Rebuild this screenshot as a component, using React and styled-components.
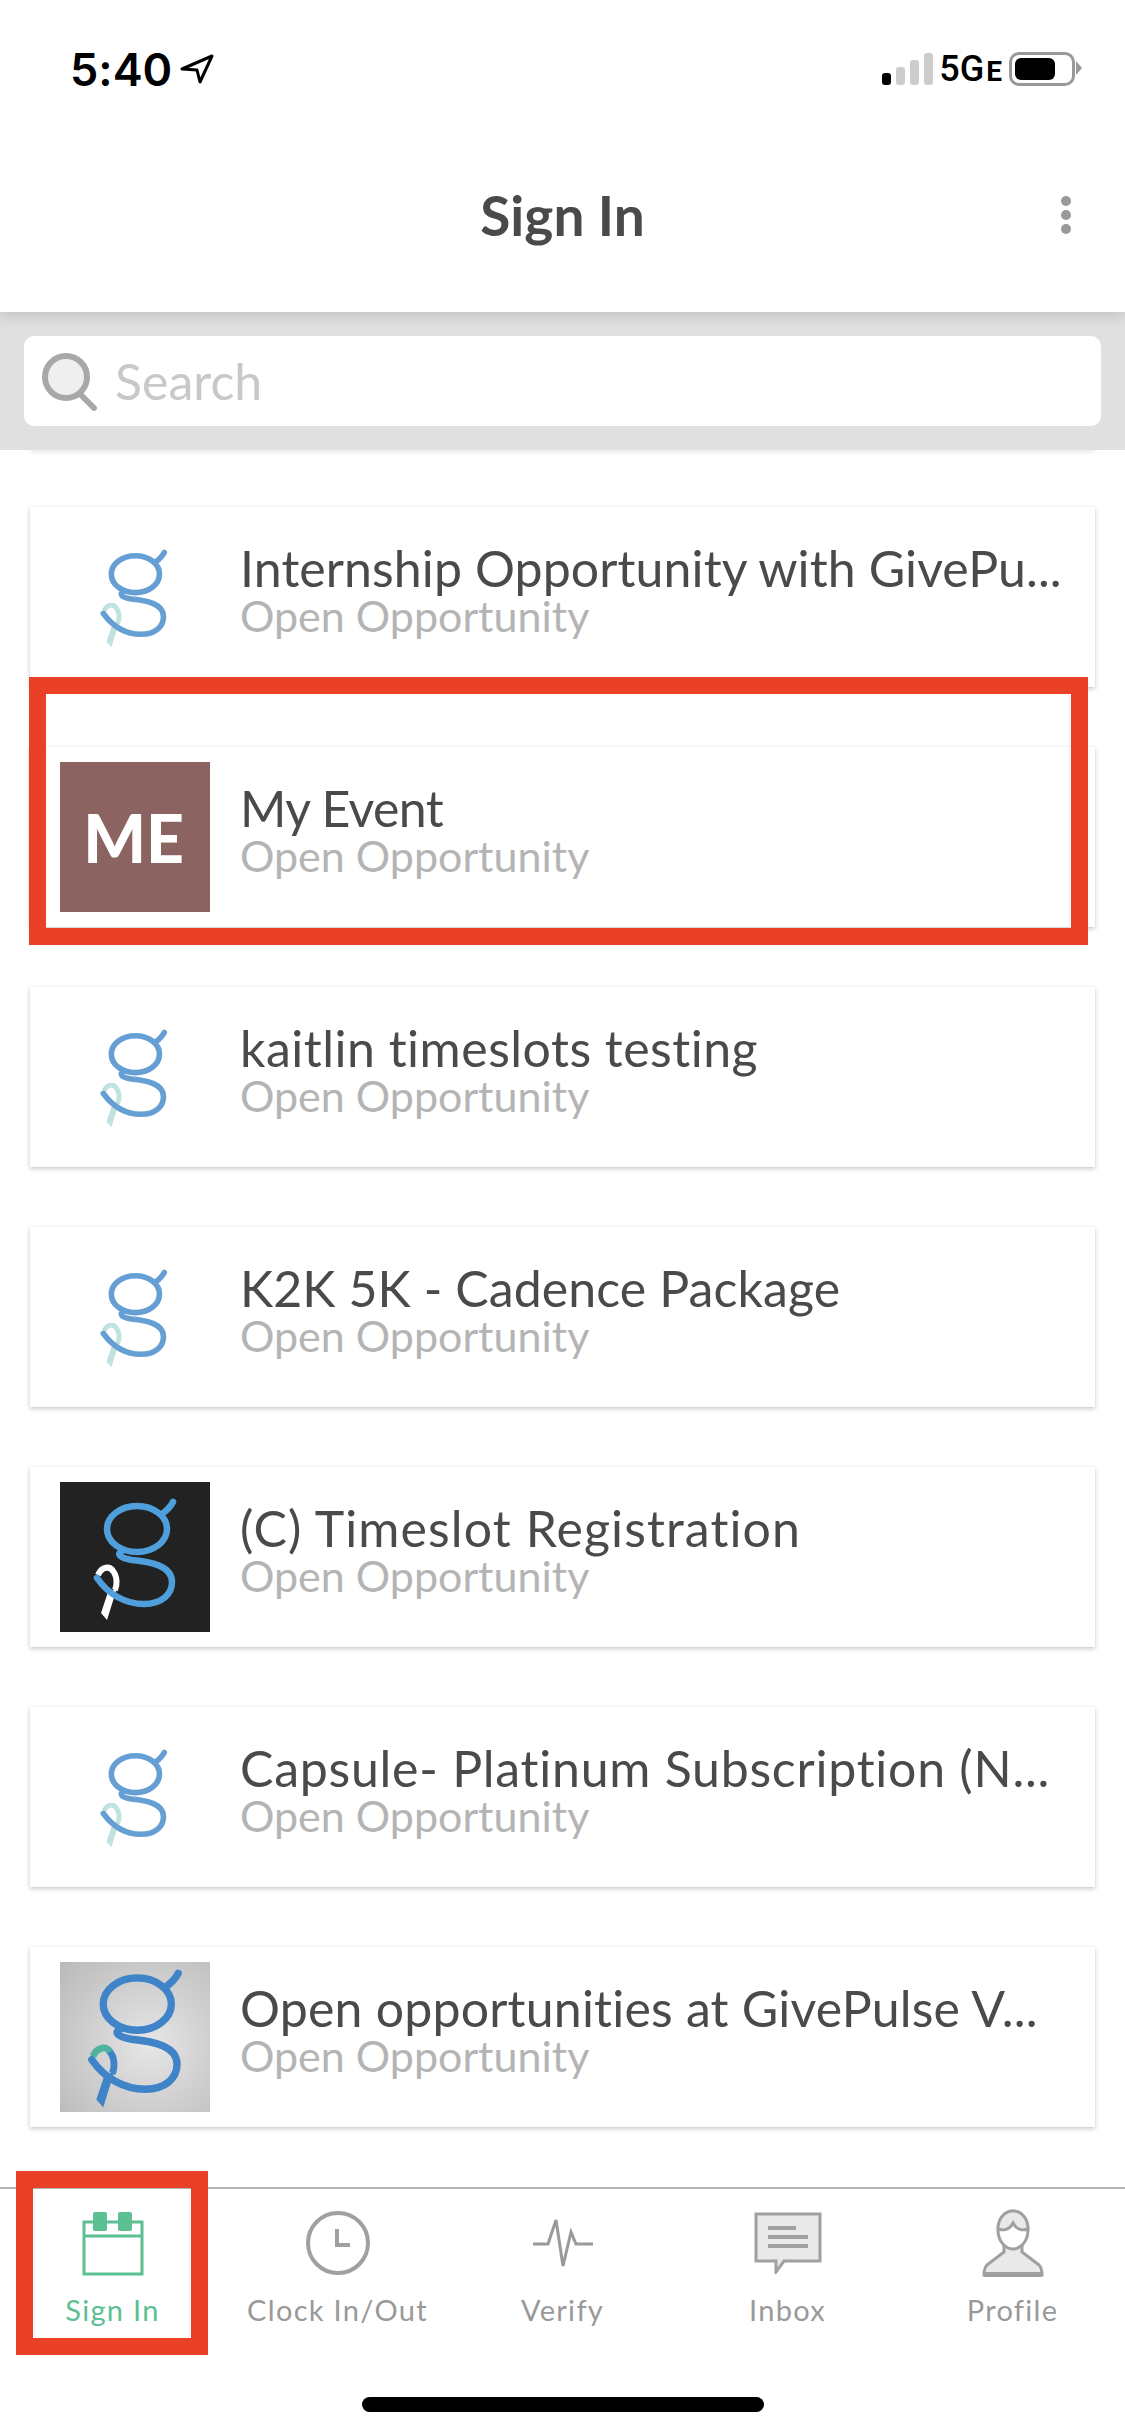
import React from 'react'
import styled, { createGlobalStyle } from 'styled-components'

const GlobalStyle = createGlobalStyle`
    html, body {
        margin: 0;
        padding: 0;
        background: #fff;
    }
    * {
        box-sizing: border-box;
    }
`;

const items = [
    { title: 'Internship Opportunity with GivePu...', thumb: 'plain', track: 0.1 },
    { title: 'My Event', thumb: 'initials', track: -0.6 },
    { title: 'kaitlin timeslots testing', thumb: 'plain', track: 0.5 },
    { title: 'K2K 5K - Cadence Package', thumb: 'plain', track: 0.1 },
    { title: '(C) Timeslot Registration', thumb: 'dark', track: 1.1 },
    { title: 'Capsule- Platinum Subscription (N...', thumb: 'plain', track: 0.75 },
    { title: 'Open opportunities at GivePulse V...', thumb: 'grey', track: 0.2 },
];

const logoThemes = {
    plain: { view: '-17 -18 187 187', blue: '#659fd3', ribbon: '#bfe3e0', side: '#bfe3e0', tail: '#bfe3e0', width: 7 },
    dark: { view: '0 0 150 150', blue: '#4f9fdc', ribbon: '#fff', side: '#fff', tail: '#fff', width: 6.5 },
    grey: { view: '9 10 132 132', blue: '#3f83c8', ribbon: '#4fb3a0', side: '#3f83c8', tail: '#3f83c8', width: 6.5 },
};

function Logo({ kind }) {
    const t = logoThemes[kind];
    return (
        <svg width="150" height="150" viewBox={t.view} fill="none">
            <path d="M48 110 L41 131 L47 138 L57 106 Z" fill={t.tail} />
            <path d="M52 88 C58 94 57 104 55 108" stroke={t.side} strokeWidth="6" />
            <path d="M38 93 C42 84 50 84 53 89" stroke={t.ribbon} strokeWidth="6" />
            <g stroke={t.blue} strokeWidth={t.width} strokeLinecap="round">
                <ellipse cx="77" cy="47" rx="30" ry="23" />
                <path d="M102 32 C106 29 110 26 113 20" />
                <path d="M37 96 C48 112 65 122 84 122 C102 122 112 112 112 100 C112 84 92 80 72 78 C60 76 56 72 62 69" />
            </g>
        </svg>
    );
}

function CalendarIcon() {
    return (
        <svg width="64" height="66" viewBox="0 0 64 66" fill="none" stroke="#5cc092" strokeWidth="3">
            <rect x="3" y="12" width="58" height="52" />
            <path d="M3 26 H61" />
            <rect x="12" y="2" width="14" height="19" rx="2" fill="#5cc092" stroke="none" />
            <rect x="37" y="2" width="14" height="19" rx="2" fill="#5cc092" stroke="none" />
        </svg>
    );
}

function ClockIcon() {
    return (
        <svg width="66" height="66" viewBox="0 0 66 66" fill="none" stroke="#a0a0a0" strokeWidth="4">
            <circle cx="33" cy="33" r="30" />
            <path d="M32 19 V35 H45" />
        </svg>
    );
}

function PulseIcon() {
    return (
        <svg width="62" height="50" viewBox="0 0 62 50" fill="none" stroke="#9a9a9a" strokeWidth="3">
            <path d="M1 26 H16 L24 2 L31 48 L39 14 L44 26 H61" />
        </svg>
    );
}

function InboxIcon() {
    return (
        <svg width="68" height="62" viewBox="0 0 68 62" fill="#e9e9e9" stroke="#a0a0a0" strokeWidth="3">
            <path d="M2 2 H66 V49 H30 L22 60 V49 H2 Z" />
            <path d="M14 16 H42 M14 25 H54 M14 34 H54" strokeWidth="4" fill="none" />
        </svg>
    );
}

function ProfileIcon() {
    return (
        <svg width="62" height="68" viewBox="0 0 62 68" fill="none" stroke="#a0a0a0" strokeWidth="3">
            <path d="M22 36 V43 L5 56 C2 59 2 62 2 66 H60 C60 62 60 59 57 56 L40 43 V36" fill="#e9e9e9" />
            <path d="M2 65.5 H60" strokeWidth="5" />
            <ellipse cx="31" cy="21" rx="15" ry="19" fill="#fff" />
            <path d="M16 20 C22 22 28 20 31 14 C34 20 40 22 46 20 C46 10 40 2 31 2 C22 2 16 10 16 20 Z" fill="#e9e9e9" />
        </svg>
    );
}

const tabs = [
    { label: 'Sign In', icon: <CalendarIcon />, active: true },
    { label: 'Clock In/Out', icon: <ClockIcon /> },
    { label: 'Verify', icon: <PulseIcon /> },
    { label: 'Inbox', icon: <InboxIcon /> },
    { label: 'Profile', icon: <ProfileIcon /> },
];

export default function App() {
    return (
        <Page>
            <GlobalStyle />
            <Header>
                <StatusBar>
                    <Clock>
                        5:40
                        <svg width="34" height="30" viewBox="0 0 34 30" fill="none" stroke="#000" strokeWidth="3" strokeLinejoin="round">
                            <path d="M32 2 L2 15 L17 16 L20 28 Z" />
                        </svg>
                    </Clock>
                    <StatusIcons>
                        <Signal>
                            <Bar $h={12} $on />
                            <Bar $h={18} />
                            <Bar $h={25} />
                            <Bar $h={32} />
                        </Signal>
                        <Network>5G</Network>
                        <NetworkSmall>E</NetworkSmall>
                        <Battery>
                            <BatteryLevel />
                        </Battery>
                    </StatusIcons>
                </StatusBar>
                <NavBar>
                    <NavTitle>Sign In</NavTitle>
                    <Kebab>
                        <i /><i /><i />
                    </Kebab>
                </NavBar>
            </Header>

            <SearchBand>
                <SearchBox>
                    <svg width="60" height="62" viewBox="0 0 60 62" fill="#efefef" stroke="#a8a8a8" strokeWidth="6" strokeLinecap="round">
                        <circle cx="26" cy="27" r="21" />
                        <path d="M40 44 L54 58" />
                    </svg>
                    <SearchText>Search</SearchText>
                </SearchBox>
            </SearchBand>

            <List>
                {items.map((item) => (
                    <Card key={item.title}>
                        <Thumb $kind={item.thumb}>
                            {item.thumb === 'initials' ? 'ME' : <Logo kind={item.thumb} />}
                        </Thumb>
                        <CardText>
                            <Title $track={item.track}>{item.title}</Title>
                            <Subtitle>Open Opportunity</Subtitle>
                        </CardText>
                    </Card>
                ))}
            </List>

            <TabBar>
                {tabs.map((tab) => (
                    <Tab key={tab.label}>
                        <TabIcon>{tab.icon}</TabIcon>
                        <TabLabel $active={tab.active}>{tab.label}</TabLabel>
                    </Tab>
                ))}
            </TabBar>
            <HomeArea>
                <HomeBar />
            </HomeArea>

            <Highlight $top={677} $left={29} $width={1059} $height={268} />
            <Highlight $top={2171} $left={16} $width={192} $height={184} />
        </Page>
    );
}

const Page = styled.div`
    position: relative;
    width: 1125px;
    height: 2436px;
    display: flex;
    flex-direction: column;
    overflow: hidden;
    background: #fff;
    font-family: 'Lato', 'Liberation Sans', sans-serif;
    font-variant-ligatures: none;
`;

const Header = styled.div`
    position: relative;
    z-index: 2;
    height: 312px;
    flex-shrink: 0;
    background: #fff;
    box-shadow: 0 4px 14px rgba(0, 0, 0, 0.14);
`;

const StatusBar = styled.div`
    height: 138px;
    padding: 0 50px 0 70px;
    display: flex;
    align-items: center;
    justify-content: space-between;
`;

const Clock = styled.div`
    display: flex;
    align-items: center;
    gap: 8px;
    font-family: 'Inter', sans-serif;
    font-weight: 600;
    font-size: 45px;
    color: #000;
`;

const StatusIcons = styled.div`
    display: flex;
    align-items: flex-end;
`;

const Signal = styled.div`
    display: flex;
    align-items: flex-end;
    gap: 5px;
    margin-right: 6px;
    margin-bottom: 1px;
`;

const Bar = styled.div`
    width: 9px;
    height: ${(p) => p.$h}px;
    border-radius: 3px;
    background: ${(p) => (p.$on ? '#000' : '#cccccc')};
`;

const Network = styled.div`
    font-family: 'Roboto', sans-serif;
    font-weight: 500;
    font-size: 36px;
    line-height: 34px;
    color: #000;
`;

const NetworkSmall = styled.div`
    font-family: 'Roboto', sans-serif;
    font-weight: 700;
    font-size: 28px;
    line-height: 28px;
    color: #000;
    margin: 0 7px 0 2px;
`;

const Battery = styled.div`
    position: relative;
    width: 66px;
    height: 34px;
    padding: 3px;
    border: 3.5px solid #999;
    border-radius: 10px;

    &::after {
        content: '';
        position: absolute;
        top: 6px;
        right: -10px;
        width: 6px;
        height: 14px;
        background: #999;
        clip-path: polygon(0 0, 100% 50%, 0 100%);
    }
`;

const BatteryLevel = styled.div`
    width: 40px;
    height: 100%;
    border-radius: 6px;
    background: #000;
`;

const NavBar = styled.div`
    height: 154px;
    display: grid;
    grid-template-columns: 1fr auto 1fr;
    align-items: center;
`;

const NavTitle = styled.div`
    grid-column: 2;
    font-weight: 700;
    font-size: 55px;
    color: #4a4a4a;
`;

const Kebab = styled.div`
    grid-column: 3;
    justify-self: end;
    display: flex;
    flex-direction: column;
    gap: 4px;
    margin-right: 54px;

    i {
        display: block;
        width: 10px;
        height: 10px;
        border-radius: 50%;
        background: #999;
    }
`;

const SearchBand = styled.div`
    position: relative;
    z-index: 1;
    height: 138px;
    flex-shrink: 0;
    padding: 24px;
    background: #e0e0e0;

    &::after {
        content: '';
        position: absolute;
        left: 30px;
        right: 30px;
        bottom: 0;
        height: 3px;
        box-shadow: 0 2px 4px rgba(0, 0, 0, 0.12);
    }
`;

const SearchBox = styled.div`
    height: 90px;
    padding-left: 16px;
    display: flex;
    align-items: center;
    gap: 15px;
    border-radius: 10px;
    background: #fff;
`;

const SearchText = styled.div`
    font-size: 50px;
    color: #c8c8c8;
`;

const List = styled.div`
    flex-shrink: 0;
    padding: 57px 30px 60px;
    display: flex;
    flex-direction: column;
    gap: 60px;
`;

const Card = styled.div`
    height: 180px;
    flex-shrink: 0;
    padding: 15px 22px 15px 30px;
    display: flex;
    align-items: center;
    gap: 30px;
    background: #fff;
    box-shadow: 0 2px 5px rgba(0, 0, 0, 0.2), 0 0 2px rgba(0, 0, 0, 0.05);
`;

const thumbBackground = {
    plain: '#fff',
    initials: '#8b6462',
    dark: '#222222',
    grey: 'radial-gradient(circle at 60% 55%, #e6e6e6, #b9b9b9)',
};

const Thumb = styled.div`
    width: 150px;
    height: 150px;
    flex-shrink: 0;
    padding-right: 3px;
    display: flex;
    align-items: center;
    justify-content: center;
    background: ${(p) => thumbBackground[p.$kind]};
    color: #fff;
    font-weight: 900;
    font-size: 66px;

    svg {
        flex-shrink: 0;
        margin-right: -3px;
    }
`;

const CardText = styled.div`
    min-width: 0;
    flex: 1;
    padding-bottom: 12px;
`;

const Title = styled.div`
    font-size: 50px;
    line-height: 50px;
    letter-spacing: ${(p) => p.$track}px;
    color: #4a4a4a;
    white-space: nowrap;
`;

const Subtitle = styled.div`
    font-size: 43px;
    line-height: 46px;
    color: #b4b4b4;
`;

const TabBar = styled.div`
    height: 148px;
    flex-shrink: 0;
    display: grid;
    grid-template-columns: repeat(5, 1fr);
    border-top: 2px solid #b4b4b4;
`;

const Tab = styled.div`
    display: flex;
    flex-direction: column;
    align-items: center;
    padding-top: 19px;
`;

const TabIcon = styled.div`
    height: 70px;
    display: flex;
    align-items: center;
    justify-content: center;
`;

const TabLabel = styled.div`
    margin-top: 14px;
    font-size: 29px;
    letter-spacing: 1.3px;
    color: ${(p) => (p.$active ? '#5cc092' : '#999')};
`;

const HomeArea = styled.div`
    flex: 1;
    display: flex;
    justify-content: center;
    padding-top: 62px;
`;

const HomeBar = styled.div`
    width: 402px;
    height: 15px;
    border-radius: 8px;
    background: #000;
`;

const Highlight = styled.div`
    position: absolute;
    z-index: 3;
    top: ${(p) => p.$top}px;
    left: ${(p) => p.$left}px;
    width: ${(p) => p.$width}px;
    height: ${(p) => p.$height}px;
    border: 17px solid #ea4026;
`;
